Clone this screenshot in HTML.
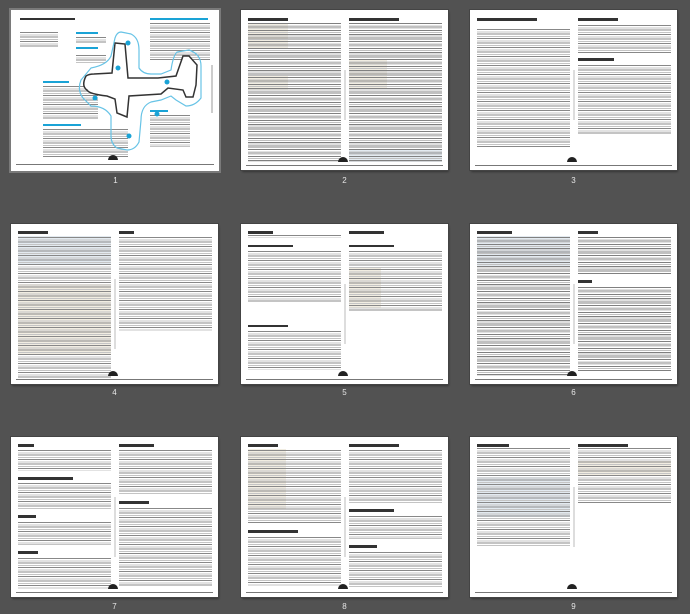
<!DOCTYPE html>
<html><head><meta charset="utf-8"><style>
html,body{margin:0;padding:0}
body{width:690px;height:614px;background:#525252;position:relative;overflow:hidden;font-family:"Liberation Sans",sans-serif}
.pg{position:absolute;background:#fff;width:207px;height:160px;box-shadow:0 0 0 1px #444,1px 2px 2px rgba(0,0,0,.35)}
.lb{position:absolute;width:207px;text-align:center;color:#e6e6e6;font-size:8px;line-height:9px}
.h{position:absolute;height:3px;background:#333}
.c{position:absolute;background:repeating-linear-gradient(180deg,transparent 0 1px,#888 1px 2px,transparent 2px 3.5px,#c4c4c4 3.5px 4.5px)}
.c.d{background:repeating-linear-gradient(180deg,transparent 0 1px,#808080 1px 2px,transparent 2px 2.8px,#c0c0c0 2.8px 3.6px)}
.bg{position:absolute;background:#f1ede2}
.bl{position:absolute;background:#e3eaf0}
.ft{position:absolute;left:5px;right:5px;bottom:4px;height:1px;background:#777}
.lg{position:absolute;left:97px;bottom:8px;width:10px;height:5px;border-radius:5px 5px 0 0;background:#222}
.sd{position:absolute;left:101px;width:2px;background:#ddd}
</style></head><body>

<div class="pg" style="left:11px;top:10px;width:208px;height:161px;box-shadow:0 0 0 2px #7a7a7a">
<div class="h" style="left:9px;top:8px;width:55px;height:2px"></div>
<div class="c" style="left:9px;top:21px;width:38px;height:16px"></div>
<div class="h" style="left:139px;top:8px;width:58px;height:2px;background:#1aa3d6"></div>
<div class="c" style="left:139px;top:12px;width:60px;height:38px"></div>
<div class="h" style="left:65px;top:22px;width:22px;height:2px;background:#1aa3d6"></div>
<div class="c" style="left:65px;top:26px;width:30px;height:7px"></div>
<div class="h" style="left:65px;top:37px;width:22px;height:2px;background:#1aa3d6"></div>
<div class="c" style="left:65px;top:44px;width:30px;height:10px"></div>
<div class="h" style="left:32px;top:71px;width:26px;height:2px;background:#1aa3d6"></div>
<div class="c" style="left:32px;top:75px;width:55px;height:35px"></div>
<div class="h" style="left:32px;top:114px;width:38px;height:2px;background:#1aa3d6"></div>
<div class="c" style="left:32px;top:118px;width:85px;height:30px"></div>
<div class="h" style="left:139px;top:100px;width:18px;height:2px;background:#1aa3d6"></div>
<div class="c" style="left:139px;top:104px;width:40px;height:33px"></div>
<svg style="position:absolute;left:0;top:0" width="208" height="161" viewBox="0 0 208 161">
<path d="M75 66 Q70 76 76 80 Q78 84 96 86 L104 89 L106 103 L116 107 L118 86 L150 84 L157 78 L172 80 L175 87 L182 87 L185 75 L186 55 L178 46 L172 46 L165 66 L147 68 L117 68 L114 34 L104 33 L101 63 L83 64 Q78 64 75 66Z" fill="#fff" stroke="#333" stroke-width="1.5"/>
<path d="M110 22 L120 24 Q128 28 128 40 L128 58 Q132 64 140 64 L150 64 L160 60 Q162 46 166 42 L178 40 Q190 44 190 56 L190 88 Q184 96 175 96 L165 90 L160 86 L150 90 L140 92 Q130 96 130 110 L128 132 Q124 140 116 140 L106 138 Q100 134 100 126 L100 106 Q94 96 80 96 L72 88 Q66 80 70 70 L80 58 Q96 55 100 46 L104 28 Q106 22 110 22Z" fill="none" stroke="#67c3e6" stroke-width="1.2"/>
<g fill="#1aa3d6"><circle cx="117" cy="33" r="2.5"/><circle cx="107" cy="58" r="2.5"/><circle cx="156" cy="72" r="2.5"/><circle cx="84" cy="88" r="2.5"/><circle cx="146" cy="104" r="2.5"/><circle cx="118" cy="126" r="2.5"/></g>
</svg>
<div style="position:absolute;right:6px;top:55px;width:2px;height:48px;background:#ccc"></div>
<div class="ft" style="bottom:6px;height:1px"></div>
<div class="lg" style="bottom:11px"></div>
</div>
<div class="lb" style="left:12px;top:176px">1</div>

<div class="pg" style="left:241px;top:10px">
<div class="h" style="left:7px;top:8px;width:40px"></div><div class="h" style="left:108px;top:8px;width:50px"></div>
<div class="bg" style="left:7px;top:14px;width:40px;height:24px"></div>
<div class="bg" style="left:7px;top:66px;width:40px;height:14px"></div>
<div class="bg" style="left:108px;top:50px;width:38px;height:28px"></div>
<div class="bl" style="left:108px;top:140px;width:93px;height:12px"></div>
<div class="c d" style="left:7px;top:12px;width:93px;height:140px"></div>
<div class="c d" style="left:108px;top:12px;width:93px;height:140px"></div>
<div class="sd" style="left:103px;top:60px;height:50px"></div>
<div class="lg"></div><div class="ft"></div>
</div>
<div class="lb" style="left:241px;top:176px">2</div>

<div class="pg" style="left:470px;top:10px">
<div class="h" style="left:7px;top:8px;width:60px"></div><div class="h" style="left:108px;top:8px;width:40px"></div>
<div class="c" style="left:7px;top:18px;width:93px;height:120px"></div>
<div class="c" style="left:108px;top:14px;width:93px;height:30px"></div>
<div class="h" style="left:108px;top:48px;width:36px"></div>
<div class="c" style="left:108px;top:54px;width:93px;height:70px"></div>
<div class="sd" style="left:103px;top:60px;height:50px"></div>
<div class="lg"></div><div class="ft"></div>
</div>
<div class="lb" style="left:470px;top:176px">3</div>

<div class="pg" style="left:11px;top:224px">
<div class="h" style="left:7px;top:7px;width:30px"></div><div class="h" style="left:108px;top:7px;width:15px"></div>
<div class="bl" style="left:7px;top:12px;width:93px;height:28px"></div>
<div class="bg" style="left:7px;top:60px;width:93px;height:70px"></div>
<div class="c" style="left:7px;top:12px;width:93px;height:145px"></div>
<div class="c" style="left:108px;top:12px;width:93px;height:95px"></div>
<div class="sd" style="left:103px;top:55px;height:70px"></div>
<div class="lg"></div><div class="ft"></div>
</div>
<div class="lb" style="left:11px;top:388px">4</div>

<div class="pg" style="left:241px;top:224px">
<div class="h" style="left:7px;top:7px;width:25px"></div><div class="h" style="left:108px;top:7px;width:35px"></div>
<div class="c" style="left:7px;top:10px;width:93px;height:4px"></div>
<div class="h" style="left:7px;top:21px;width:45px;height:2px"></div>
<div class="c" style="left:7px;top:26px;width:93px;height:52px"></div>
<div class="h" style="left:108px;top:21px;width:45px;height:2px"></div>
<div class="bg" style="left:108px;top:44px;width:32px;height:40px"></div>
<div class="c" style="left:108px;top:26px;width:93px;height:62px"></div>
<div class="h" style="left:7px;top:101px;width:40px;height:2px"></div>
<div class="c" style="left:7px;top:106px;width:93px;height:40px"></div>
<div class="sd" style="left:103px;top:60px;height:60px"></div>
<div class="lg"></div><div class="ft"></div>
</div>
<div class="lb" style="left:241px;top:388px">5</div>

<div class="pg" style="left:470px;top:224px">
<div class="h" style="left:7px;top:7px;width:35px"></div><div class="h" style="left:108px;top:7px;width:20px"></div>
<div class="bl" style="left:7px;top:12px;width:93px;height:30px"></div>
<div class="c d" style="left:7px;top:12px;width:93px;height:140px"></div>
<div class="c d" style="left:108px;top:12px;width:93px;height:38px"></div>
<div class="h" style="left:108px;top:56px;width:14px"></div>
<div class="c d" style="left:108px;top:62px;width:93px;height:85px"></div>
<div class="sd" style="left:103px;top:60px;height:60px"></div>
<div class="lg"></div><div class="ft"></div>
</div>
<div class="lb" style="left:470px;top:388px">6</div>

<div class="pg" style="left:11px;top:437px">
<div class="h" style="left:7px;top:7px;width:16px"></div><div class="h" style="left:108px;top:7px;width:35px"></div>
<div class="c" style="left:7px;top:12px;width:93px;height:22px"></div>
<div class="h" style="left:7px;top:40px;width:55px"></div>
<div class="c" style="left:7px;top:45px;width:93px;height:28px"></div>
<div class="h" style="left:7px;top:78px;width:18px"></div>
<div class="c" style="left:7px;top:84px;width:93px;height:24px"></div>
<div class="h" style="left:7px;top:114px;width:20px"></div>
<div class="c" style="left:7px;top:120px;width:93px;height:32px"></div>
<div class="c" style="left:108px;top:12px;width:93px;height:45px"></div>
<div class="h" style="left:108px;top:64px;width:30px"></div>
<div class="c" style="left:108px;top:70px;width:93px;height:80px"></div>
<div class="sd" style="left:103px;top:60px;height:60px"></div>
<div class="lg"></div><div class="ft"></div>
</div>
<div class="lb" style="left:11px;top:602px">7</div>

<div class="pg" style="left:241px;top:437px">
<div class="h" style="left:7px;top:7px;width:30px"></div><div class="h" style="left:108px;top:7px;width:50px"></div>
<div class="bg" style="left:7px;top:12px;width:38px;height:60px"></div>
<div class="c" style="left:7px;top:12px;width:93px;height:75px"></div>
<div class="h" style="left:7px;top:93px;width:50px"></div>
<div class="c" style="left:7px;top:99px;width:93px;height:50px"></div>
<div class="c" style="left:108px;top:12px;width:93px;height:55px"></div>
<div class="h" style="left:108px;top:72px;width:45px"></div>
<div class="c" style="left:108px;top:78px;width:93px;height:24px"></div>
<div class="h" style="left:108px;top:108px;width:28px"></div>
<div class="c" style="left:108px;top:114px;width:93px;height:36px"></div>
<div class="sd" style="left:103px;top:60px;height:60px"></div>
<div class="lg"></div><div class="ft"></div>
</div>
<div class="lb" style="left:241px;top:602px">8</div>

<div class="pg" style="left:470px;top:437px">
<div class="h" style="left:7px;top:7px;width:32px"></div><div class="h" style="left:108px;top:7px;width:50px"></div>
<div class="bl" style="left:7px;top:40px;width:93px;height:40px"></div>
<div class="c" style="left:7px;top:10px;width:93px;height:100px"></div>
<div class="bg" style="left:108px;top:24px;width:93px;height:14px"></div>
<div class="c" style="left:108px;top:10px;width:93px;height:56px"></div>
<div class="sd" style="left:103px;top:50px;height:60px"></div>
<div class="lg"></div><div class="ft"></div>
</div>
<div class="lb" style="left:470px;top:602px">9</div>

</body></html>
